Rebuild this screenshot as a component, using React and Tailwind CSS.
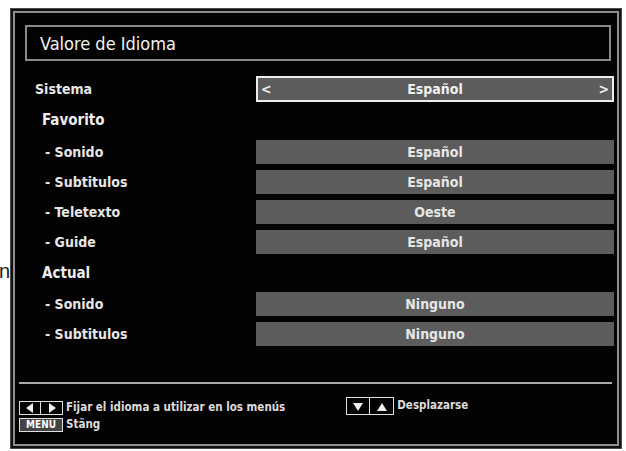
import React from 'react';

const font = { fontFamily: '"DejaVu Sans Condensed", "Liberation Sans Narrow", "Roboto", sans-serif' };

const favoritos = [
    { label: '- Sonido', value: 'Español' },
    { label: '- Subtitulos', value: 'Español' },
    { label: '- Teletexto', value: 'Oeste' },
    { label: '- Guide', value: 'Español' },
];

const actual = [
    { label: '- Sonido', value: 'Ninguno' },
    { label: '- Subtitulos', value: 'Ninguno' },
];

const BarRow = ({ label, value }) => (
    <div className="flex items-center h-[24px]">
        <div className="w-[241px] pl-[30px] text-[14px] font-bold text-[#e6e6e6]">{label}</div>
        <div className="w-[358px] h-full bg-[#5c5c5c] flex items-center justify-center text-[14px] font-bold text-[#e6e6e6]">
            {value}
        </div>
    </div>
);

const Tri = ({ dir }) => {
    const pts = {
        left: '9,1 9,11 2,6',
        right: '3,1 3,11 10,6',
        down: '1,3 11,3 6,11',
        up: '1,11 11,11 6,3',
    };
    return (
        <svg width="12" height="12" viewBox="0 0 12 12" className="block">
            <polygon points={pts[dir]} fill="#f0f0f0" />
        </svg>
    );
};

export default function App() {
    return (
        <div className="relative w-[626px] h-[451px] bg-white overflow-hidden" style={font}>
            {/* stray letter from the page behind */}
            <span className="absolute left-[-1px] top-[256px] text-[20px] text-[#222]" style={{ fontFamily: '"Liberation Sans", sans-serif' }}>n</span>

            <div className="ml-[10px] mt-[8px] w-[612px] h-[441px] border border-[#4a4a4a] bg-[#111] p-[2px]">
                <div className="h-full border-2 border-[#8e8e8e] bg-[#030303] flex flex-col">
                    {/* Title */}
                    <div className="mt-[12px] ml-[10px] mr-[6px] h-[36px] border-2 border-[#8a8a8a] flex items-center pl-[13px] text-[18px] text-[#f2f2f2]">
                        Valore de Idioma
                    </div>

                    {/* Sistema */}
                    <div className="mt-[15px] flex items-center h-[26px]">
                        <div className="w-[241px] pl-[20px] text-[14px] font-bold text-[#e6e6e6]">Sistema</div>
                        <div className="w-[358px] h-full bg-[#5c5c5c] border-2 border-[#ececec] flex items-center justify-between px-[3px] text-[14px] font-bold text-[#f0f0f0]">
                            <span>&lt;</span>
                            <span>Español</span>
                            <span>&gt;</span>
                        </div>
                    </div>

                    <div className="h-[38px] flex items-center pl-[27px] pb-[2px] text-[15px] font-bold text-[#eeeeee]">Favorito</div>
                    <div className="flex flex-col gap-[6px]">
                        {favoritos.map((r, i) => <BarRow key={i} {...r} />)}
                    </div>

                    <div className="h-[38px] flex items-center pl-[27px] text-[15px] font-bold text-[#eeeeee]">Actual</div>
                    <div className="flex flex-col gap-[6px]">
                        {actual.map((r, i) => <BarRow key={i} {...r} />)}
                    </div>

                    {/* divider */}
                    <div className="mt-[36px] ml-[4px] mr-[5px] h-[2px] bg-[#a8a8a8]" />

                    {/* Footer */}
                    <div className="mt-[17px] ml-[4px] flex items-start text-[11.5px] font-bold text-[#dcdcdc] leading-none">
                        <div className="flex flex-col gap-[3px]">
                            <div className="flex items-center gap-[3px]">
                                <div className="flex border border-[#e0e0e0] h-[14px]">
                                    <div className="w-[21px] flex items-center justify-center border-r border-[#e0e0e0]"><Tri dir="left" /></div>
                                    <div className="w-[21px] flex items-center justify-center"><Tri dir="right" /></div>
                                </div>
                                <span>Fijar el idioma a utilizar en los menús</span>
                            </div>
                            <div className="flex items-center gap-[3px]">
                                <div className="w-[44px] h-[14px] border border-[#e0e0e0] bg-[#444] flex items-center justify-center text-[10px] text-white">MENU</div>
                                <span>Stäng</span>
                            </div>
                        </div>
                        <div className="ml-[61px] mt-[-4px] flex items-center gap-[3px]">
                            <div className="flex border border-[#e0e0e0] h-[18px]">
                                <div className="w-[23px] flex items-center justify-center border-r border-[#e0e0e0]"><Tri dir="down" /></div>
                                <div className="w-[23px] flex items-center justify-center"><Tri dir="up" /></div>
                            </div>
                            <span>Desplazarse</span>
                        </div>
                    </div>
                </div>
            </div>
        </div>
    );
}
